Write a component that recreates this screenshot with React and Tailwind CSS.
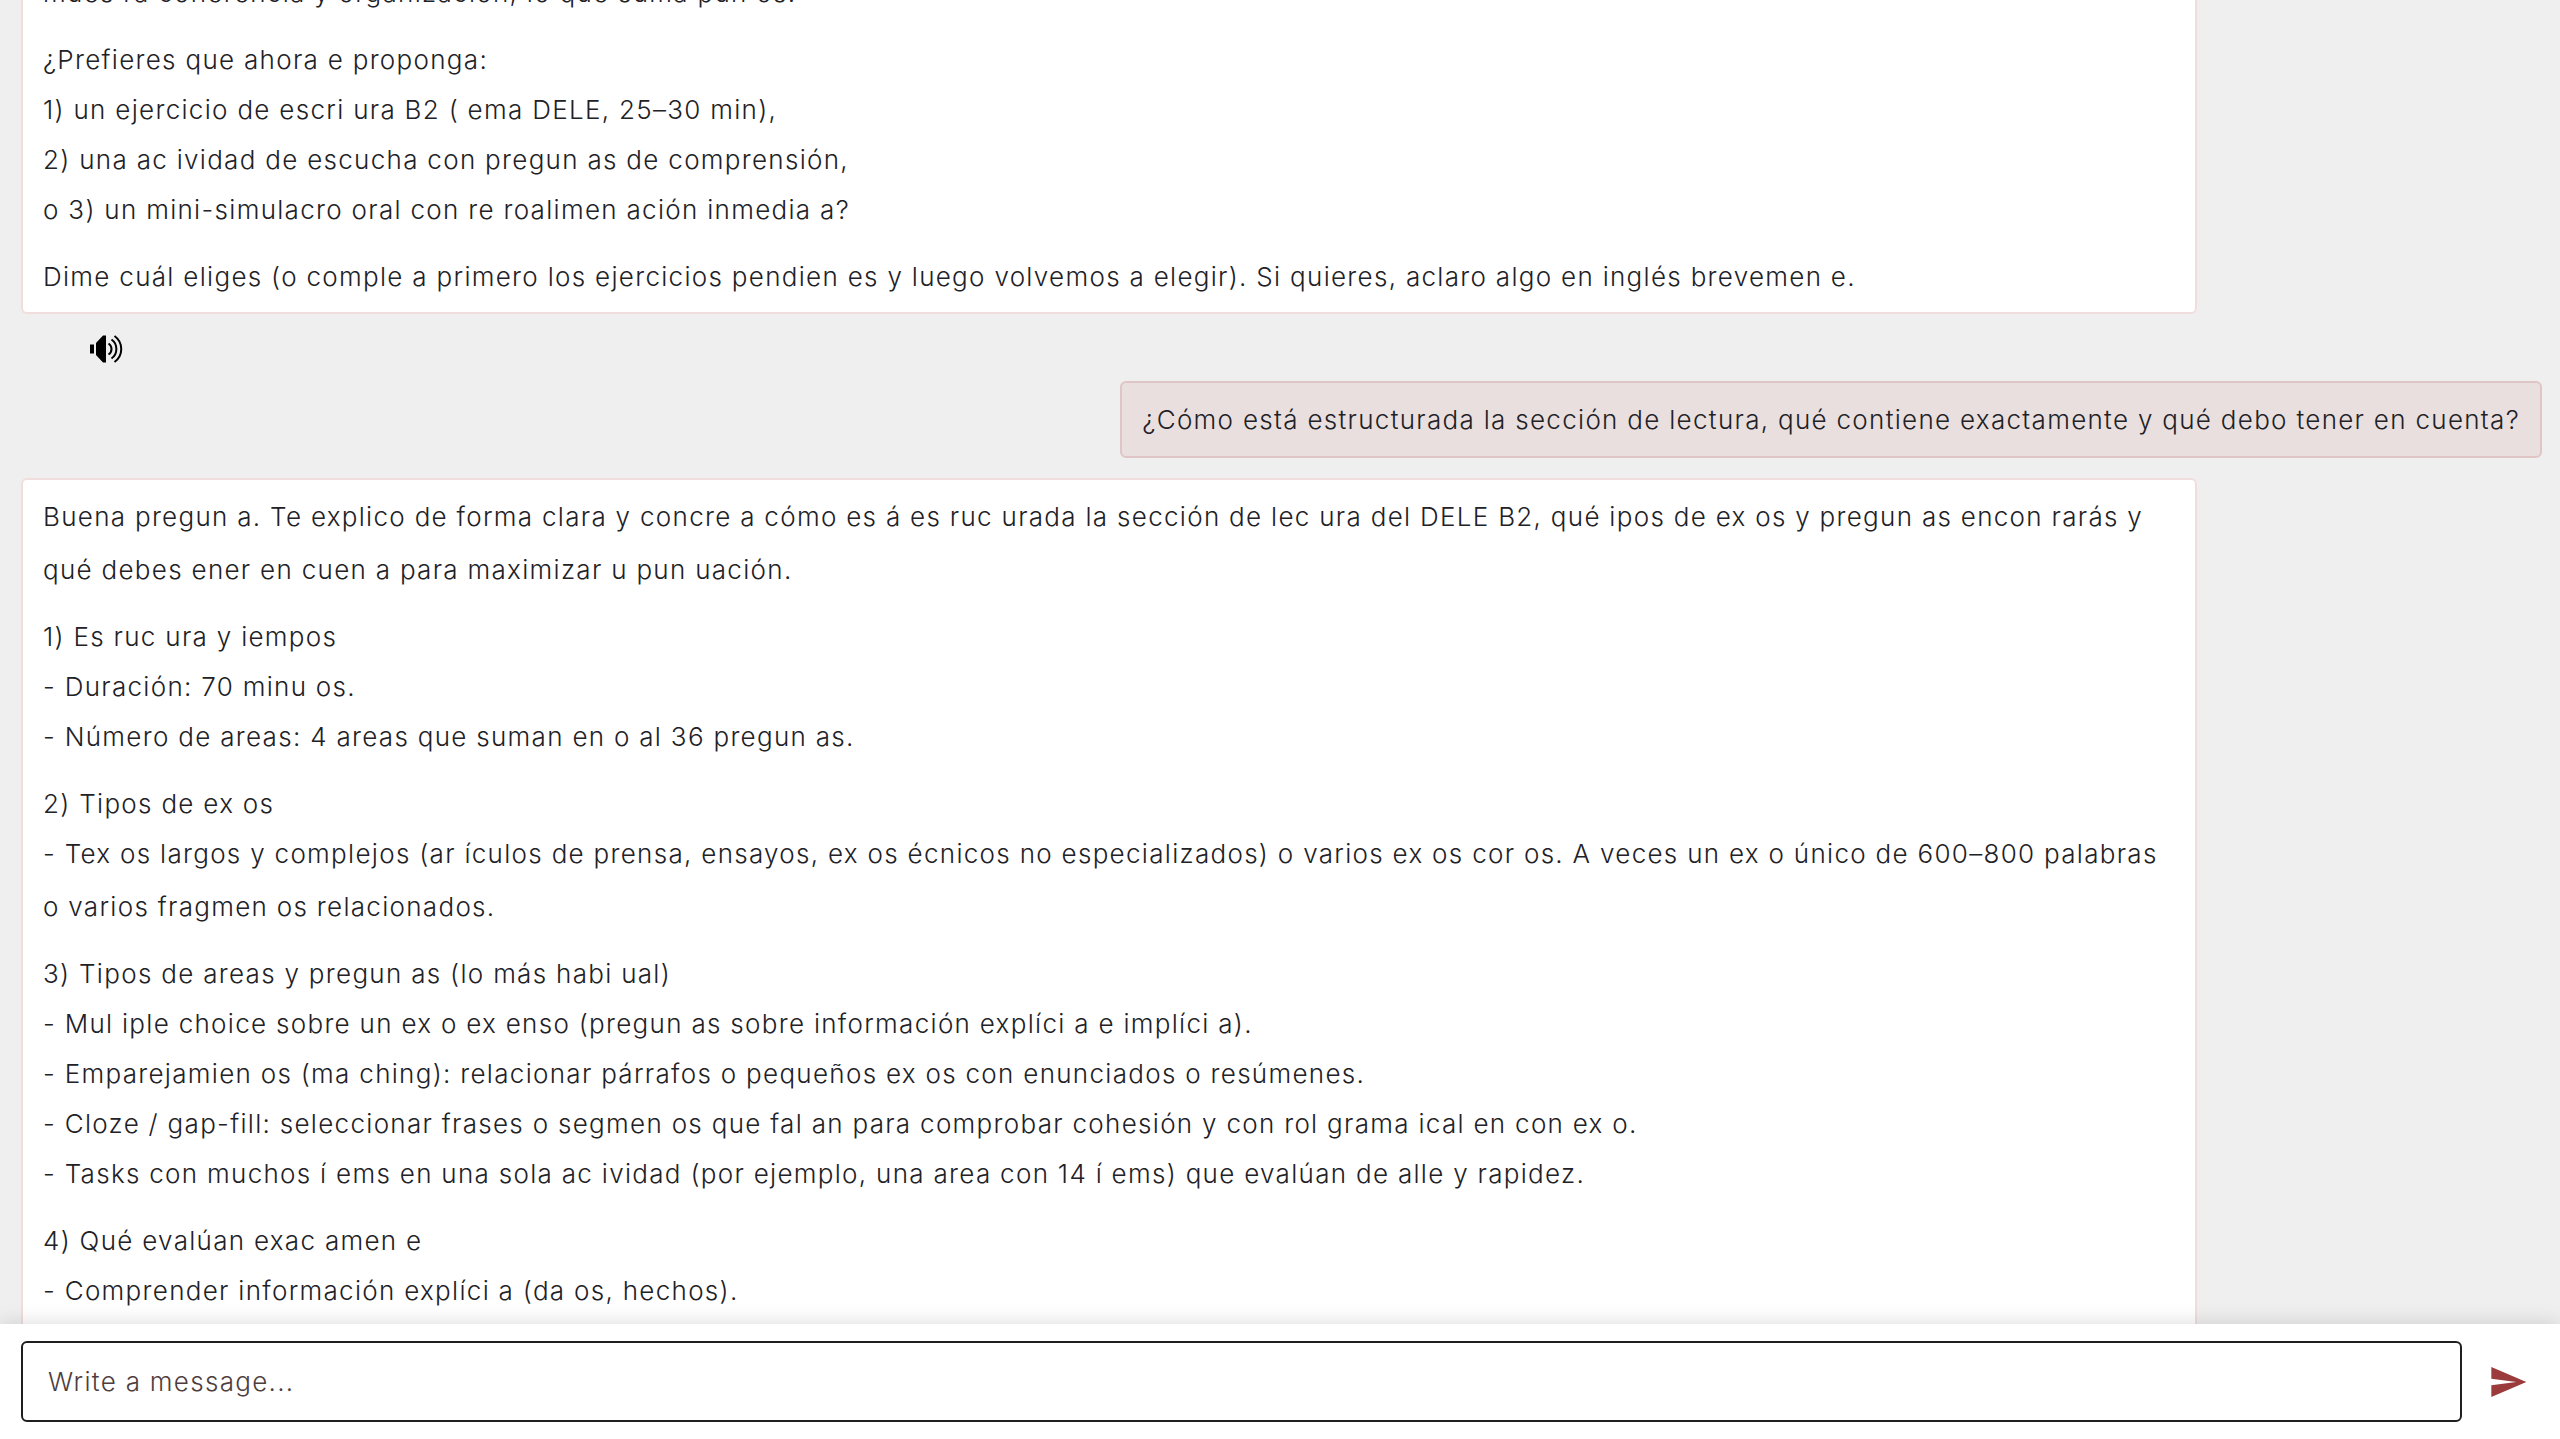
import React, { useState } from "react";

const proposal = [
  ["mues ra coherencia y organización, lo que suma pun os."],
  [
    "¿Prefieres que ahora e proponga:",
    "1) un ejercicio de escri ura B2 ( ema DELE, 25–30 min),",
    "2) una ac ividad de escucha con pregun as de comprensión,",
    "o 3) un mini-simulacro oral con re roalimen ación inmedia a?",
  ],
  [
    "Dime cuál eliges (o comple a primero los ejercicios pendien es y luego volvemos a elegir). Si quieres, aclaro algo en inglés brevemen e.",
  ],
];

const answer = [
  [
    "Buena pregun a. Te explico de forma clara y concre a cómo es á es ruc urada la sección de lec ura del DELE B2, qué ipos de ex os y pregun as encon rarás y qué debes ener en cuen a para maximizar u pun uación.",
  ],
  [
    "1) Es ruc ura y iempos",
    "- Duración: 70 minu os.",
    "- Número de areas: 4 areas que suman en o al 36 pregun as.",
  ],
  [
    "2) Tipos de ex os",
    "- Tex os largos y complejos (ar ículos de prensa, ensayos, ex os écnicos no especializados) o varios ex os cor os. A veces un ex o único de 600–800 palabras o varios fragmen os relacionados.",
  ],
  [
    "3) Tipos de areas y pregun as (lo más habi ual)",
    "- Mul iple choice sobre un ex o ex enso (pregun as sobre información explíci a e implíci a).",
    "- Emparejamien os (ma ching): relacionar párrafos o pequeños ex os con enunciados o resúmenes.",
    "- Cloze / gap-fill: seleccionar frases o segmen os que fal an para comprobar cohesión y con rol grama ical en con ex o.",
    "- Tasks con muchos í ems en una sola ac ividad (por ejemplo, una area con 14 í ems) que evalúan de alle y rapidez.",
  ],
  [
    "4) Qué evalúan exac amen e",
    "- Comprender información explíci a (da os, hechos).",
  ],
];

const Paragraphs = ({ items }) => (
  <div className="flex flex-col gap-[14px]">
    {items.map((lines, i) => (
      <div key={i} className="-space-y-[3px]">
        {lines.map((line, j) => (
          <p key={j}>{line}</p>
        ))}
      </div>
    ))}
  </div>
);

const SpeakerIcon = () => (
  <svg viewBox="0 0 34 28" className="w-[34px] h-7" aria-hidden="true">
    <path d="M0 9.5h4v9H0zM6 8l7-7.5h3v27h-3L6 20z" fill="#000" />
    <g fill="none" stroke="#000" strokeWidth="2">
      <path d="M18.500 8.500c4 2.500 4 8.500 0 11" />
      <path d="M21.500 4.500c6.500 4.500 6.500 14.500 0 19" />
      <path d="M24.500 1c9 6.500 9 19.500 0 26" />
    </g>
  </svg>
);

const SendIcon = () => (
  <svg viewBox="0 0 24 24" className="size-10" fill="#9b3b3b" aria-hidden="true">
    <path d="M2.01 21 23 12 2.01 3 2 10l15 2-15 2z" />
  </svg>
);

const App = () => {
  const [message, setMessage] = useState("");

  return (
    <div className="h-screen flex flex-col bg-[#efefef] text-[#212126] font-['Inter',sans-serif] font-light text-[26px] leading-[53px] tracking-wider">
      <main className="flex-1 min-h-0 overflow-hidden pl-[21px] pr-[18px]">
        {/* previous answer, scrolled past the top */}
        <div className="-mt-[34px] w-[86.333%] bg-white border-2 border-t-0 border-[#f0dede] rounded-b-md px-5 pb-[9px]">
          <Paragraphs items={proposal} />
        </div>

        <div className="h-[67px] pl-[69px] flex items-start pt-[21px]">
          <button type="button" aria-label="Play audio">
            <SpeakerIcon />
          </button>
        </div>

        <div className="flex justify-end">
          <p className="bg-[#e9dfdf] border-2 border-[#dfc5c5] rounded-md px-5 py-[10px] font-[350]">
            ¿Cómo está estructurada la sección de lectura, qué contiene
            exactamente y qué debo tener en cuenta?
          </p>
        </div>

        <div className="mt-5 w-[86.333%] bg-white border-2 border-[#f0dede] rounded-md px-5 py-[10px]">
          <Paragraphs items={answer} />
        </div>
      </main>

      <form
        onSubmit={(e) => e.preventDefault()}
        className="relative bg-white flex items-center pl-[21px] pr-8 py-[17px] shadow-[0_0_20px_rgba(0,0,0,0.15)]"
      >
        <input
          type="text"
          aria-label="Message"
          placeholder="Write a message..."
          value={message}
          onChange={(e) => setMessage(e.target.value)}
          className="flex-1 h-[81px] border-2 border-[#1f1f1f] rounded-md px-[25px] tracking-wider placeholder:text-[#4f3d3d] outline-none"
        />
        <button type="submit" aria-label="Send" className="ml-[26px]">
          <SendIcon />
        </button>
      </form>
    </div>
  );
};

export default App;
